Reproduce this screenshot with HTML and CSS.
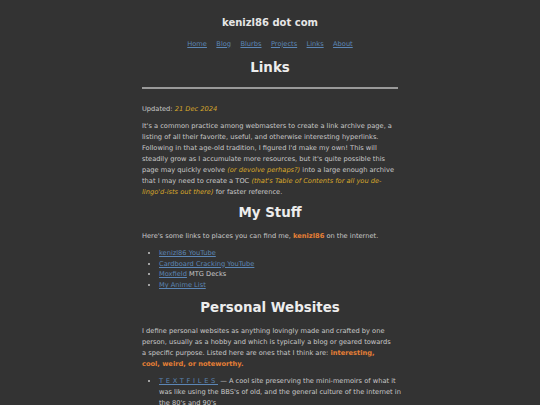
FILE: index.html
```html
<!DOCTYPE html>
<html lang="en">
<head>
<meta charset="utf-8">
<title>Links - kenizl86 dot com</title>
<link rel="stylesheet" href="styles.css">
</head>
<body>
<div class="page">
  <header class="site-header">
    <div class="site-title">kenizl86 dot com</div>
    <nav class="site-nav">
      <a href="#">Home</a>
      <a href="#">Blog</a>
      <a href="#">Blurbs</a>
      <a href="#">Projects</a>
      <a href="#">Links</a>
      <a href="#">About</a>
    </nav>
  </header>
  <main class="content">
    <h1 class="page-title">Links</h1>
    <hr class="rule">
    <p class="updated">Updated: <em class="hl">21 Dec 2024</em></p>
    <p>It's a common practice among webmasters to create a link archive page, a listing of all their favorite, useful, and otherwise interesting hyperlinks. Following in that age-old tradition, I figured I'd make my own! This will steadily grow as I accumulate more resources, but it's quite possible this page may quickly evolve <em class="hl">(or devolve perhaps?)</em> into a large enough archive that I may need to create a TOC <em class="hl">(that's Table of Contents for all you de-lingo'd-ists out there)</em> for faster reference.</p>
    <h2 class="section-title">My Stuff</h2>
    <p>Here's some links to places you can find me, <strong class="accent">kenizl86</strong> on the internet.</p>
    <ul class="links">
      <li><a href="#">kenizl86 YouTube</a></li>
      <li><a href="#">Cardboard Cracking YouTube</a></li>
      <li><a href="#">Moxfield</a> MTG Decks</li>
      <li><a href="#">My Anime List</a></li>
    </ul>
    <h2 class="section-title">Personal Websites</h2>
    <p class="sites-intro">I define personal websites as anything lovingly made and crafted by one person, usually as a hobby and which is typically a blog or geared towards a specific purpose. Listed here are ones that I think are: <strong class="accent">interesting, cool, weird, or noteworthy.</strong></p>
    <ul class="links sites">
      <li><a href="#" class="spaced">TEXTFILES</a> — A cool site preserving the mini-memoirs of what it was like using the BBS's of old, and the general culture of the internet in the 80's and 90's</li>
    </ul>
  </main>
</div>
</body>
</html>
```
FILE: styles.css
```css
html, body {
  margin: 0;
  padding: 0;
  background: #333333;
}
body {
  font-family: "DejaVu Sans", Verdana, sans-serif;
  font-size: 6.67px;
  line-height: 11px;
  color: #c9c9c9;
}
.page {
  width: 256px;
  margin: 0 auto;
  padding-top: 16px;
}
.site-header {
  text-align: center;
}
.site-title {
  font-size: 10px;
  line-height: 14px;
  font-weight: bold;
  color: #e6e6e6;
}
.site-nav {
  margin-top: 8.5px;
  display: flex;
  justify-content: center;
  gap: 9.4px;
}
.site-nav a, .links a {
  color: #5c86b5;
  text-decoration: underline;
}
.page-title, .section-title {
  text-align: center;
  font-size: 13.4px;
  line-height: 18px;
  font-weight: bold;
  color: #ededed;
  margin: 0;
}
.page-title {
  margin-top: 9.5px;
}
.rule {
  border: 0;
  height: 2px;
  background: #9a9a9a;
  margin: 10px 0 0;
}
p {
  margin: 6px 0;
}
.updated {
  margin-top: 14.5px;
}
.sites-intro {
  padding-right: 4px;
}
.hl {
  color: #d9a82a;
  font-style: italic;
}
.accent {
  color: #e57f36;
  font-weight: bold;
}
.section-title {
  margin-top: 6px;
  margin-bottom: 9.5px;
}
.links {
  margin: 6px 0 8px;
  padding-left: 17px;
  line-height: 10.67px;
}
.sites {
  line-height: 11px;
  margin-right: -5px;
}
.spaced {
  letter-spacing: 2.7px;
}
```
